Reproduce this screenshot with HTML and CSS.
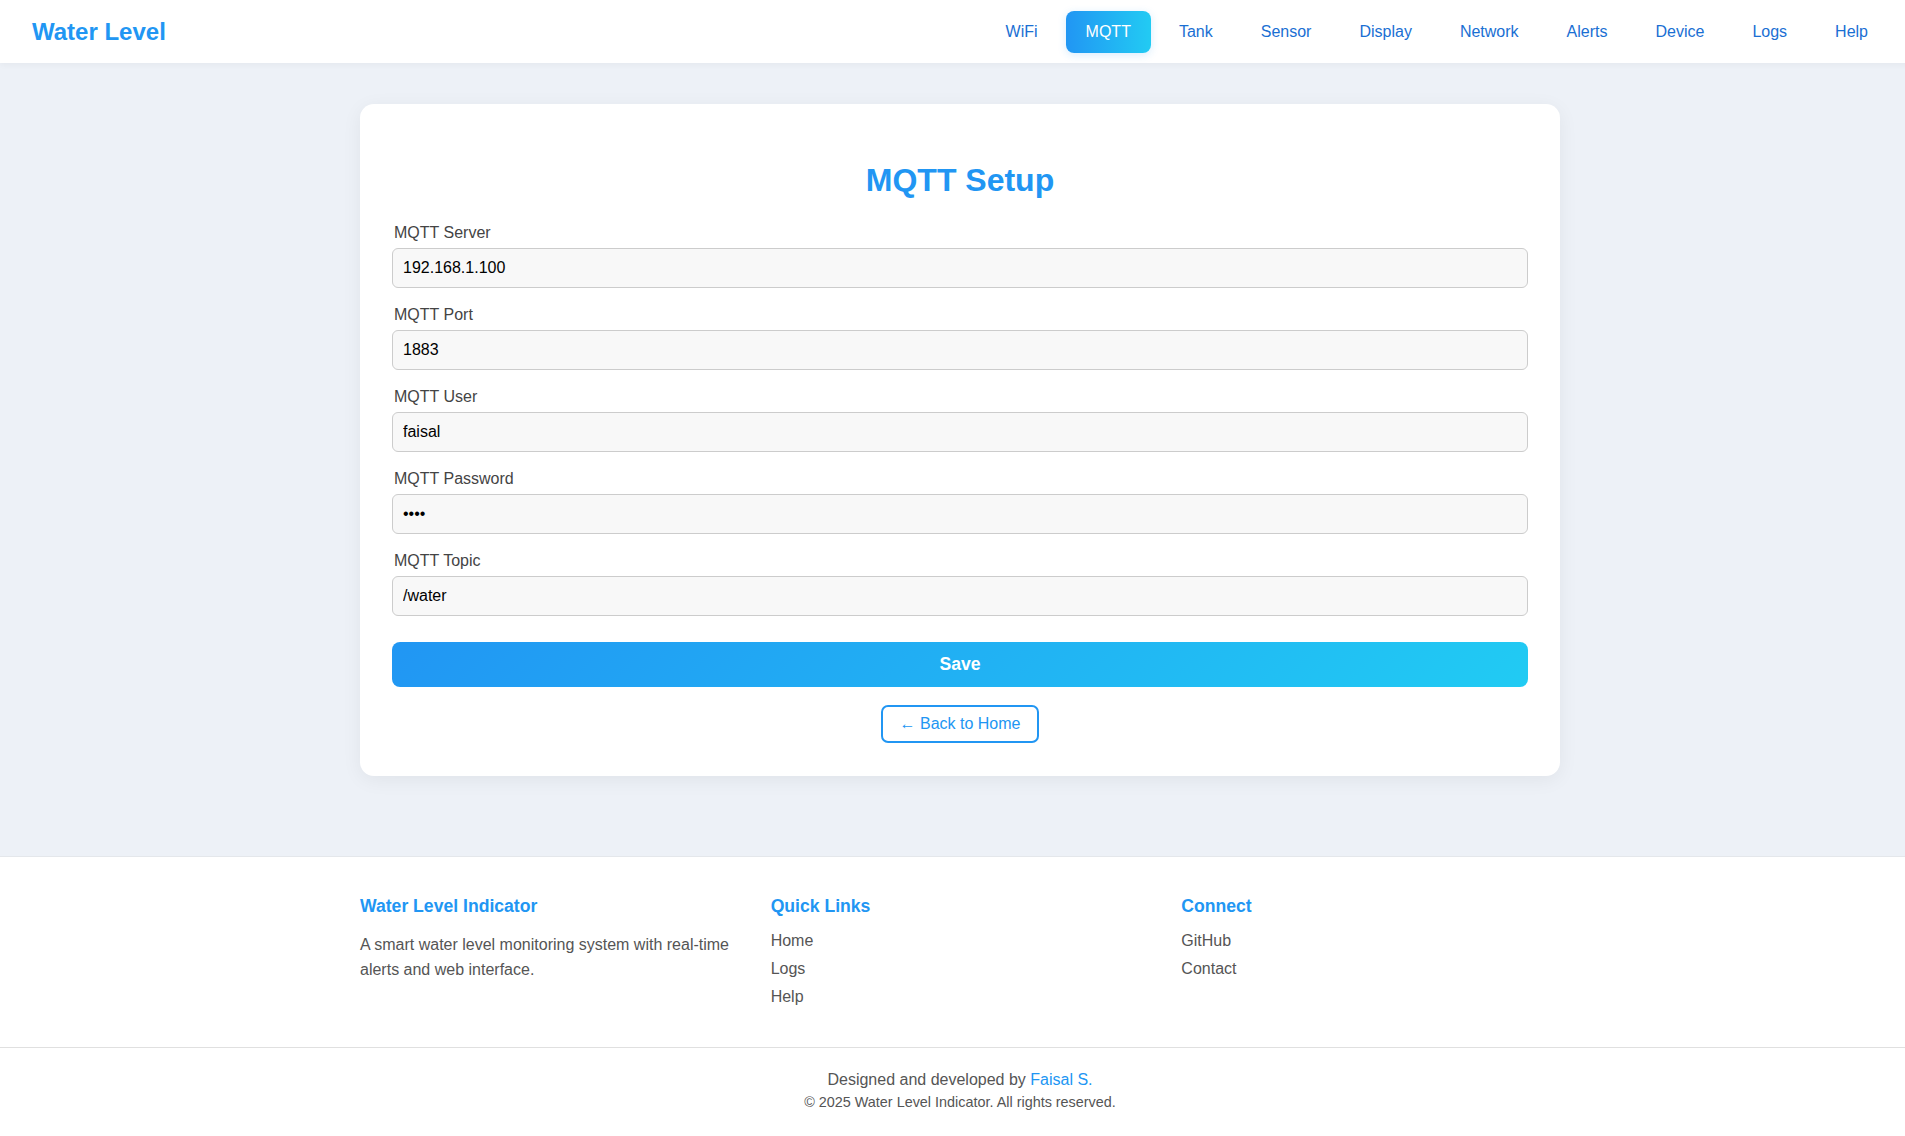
FILE: index.html
```html
<!DOCTYPE html>
<html lang="en">
<head>
<meta charset="utf-8">
<title>MQTT Setup - Water Level</title>
<link rel="stylesheet" href="styles.css">
</head>
<body>
<div class="page">
  <header class="topbar">
    <div class="logo">Water Level</div>
    <nav class="nav">
      <a href="#" class="nav-link">WiFi</a>
      <a href="#" class="nav-link active">MQTT</a>
      <a href="#" class="nav-link">Tank</a>
      <a href="#" class="nav-link">Sensor</a>
      <a href="#" class="nav-link">Display</a>
      <a href="#" class="nav-link">Network</a>
      <a href="#" class="nav-link">Alerts</a>
      <a href="#" class="nav-link">Device</a>
      <a href="#" class="nav-link">Logs</a>
      <a href="#" class="nav-link">Help</a>
    </nav>
  </header>

  <main class="main">
    <section class="card">
      <h2 class="card-title">MQTT Setup</h2>
      <form class="form">
        <div class="field">
          <label class="field-label">MQTT Server</label>
          <input class="field-input" type="text" value="192.168.1.100">
        </div>
        <div class="field">
          <label class="field-label">MQTT Port</label>
          <input class="field-input" type="text" value="1883">
        </div>
        <div class="field">
          <label class="field-label">MQTT User</label>
          <input class="field-input" type="text" value="faisal">
        </div>
        <div class="field">
          <label class="field-label">MQTT Password</label>
          <input class="field-input" type="password" value="1234">
        </div>
        <div class="field">
          <label class="field-label">MQTT Topic</label>
          <input class="field-input" type="text" value="/water">
        </div>
        <button type="button" class="save-btn">Save</button>
      </form>
      <div class="back-row">
        <a href="#" class="back-btn">← Back to Home</a>
      </div>
    </section>
  </main>

  <footer class="footer">
    <div class="footer-top">
      <div class="footer-col">
        <h3 class="footer-heading">Water Level Indicator</h3>
        <p class="footer-text">A smart water level monitoring system with real-time alerts and web interface.</p>
      </div>
      <div class="footer-col">
        <h3 class="footer-heading">Quick Links</h3>
        <ul class="footer-list">
          <li><a href="#" class="footer-link">Home</a></li>
          <li><a href="#" class="footer-link">Logs</a></li>
          <li><a href="#" class="footer-link">Help</a></li>
        </ul>
      </div>
      <div class="footer-col">
        <h3 class="footer-heading">Connect</h3>
        <ul class="footer-list">
          <li><a href="#" class="footer-link">GitHub</a></li>
          <li><a href="#" class="footer-link">Contact</a></li>
        </ul>
      </div>
    </div>
    <div class="footer-bottom">
      <div class="credit">Designed and developed by <a href="#" class="credit-link">Faisal S.</a></div>
      <div class="copyright">© 2025 Water Level Indicator. All rights reserved.</div>
    </div>
  </footer>
</div>
</body>
</html>
```
FILE: styles.css
```css
html {
  overflow-x: hidden;
}

body {
  margin: 0;
  font-family: "Liberation Sans", Arial, sans-serif;
  line-height: 1.6;
  color: #333;
  background: #edf1f7;
}

.page {
  width: 1920px;
}

a {
  text-decoration: none;
}

/* Header */
.topbar {
  height: 63px;
  box-sizing: border-box;
  padding: 0 32px;
  display: flex;
  align-items: center;
  justify-content: space-between;
  background: #fff;
  box-shadow: 0 2px 6px rgba(0, 0, 0, 0.04);
  position: relative;
  z-index: 1;
}

.logo {
  font-size: 24px;
  font-weight: bold;
  color: #2196f3;
  line-height: 1.15;
}

.nav {
  display: flex;
  gap: 8px;
}

.nav-link {
  display: block;
  padding: 11px 20px;
  font-size: 16px;
  line-height: 20px;
  color: #1a6fd3;
  border-radius: 8px;
}

.nav-link.active {
  color: #fff;
  background: linear-gradient(90deg, #2196f3, #22cbf3);
  box-shadow: 0 2px 8px rgba(33, 150, 243, 0.18);
}

/* Main */
.main {
  padding: 41px 0 80px;
}

.card {
  width: 1200px;
  box-sizing: border-box;
  margin: 0 auto;
  padding: 32px;
  background: #fff;
  border-radius: 14px;
  box-shadow: 0 4px 20px rgba(0, 0, 0, 0.06);
}

.card-title {
  margin: 26px 0 20px;
  text-align: center;
  font-size: 32px;
  line-height: 37px;
  color: #2196f3;
}

.field {
  margin-bottom: 13.4px;
}

.field-label {
  display: block;
  padding: 1px 0 0 2px;
  margin-bottom: 2px;
  font-size: 16px;
  color: #444;
}

.field-input {
  display: block;
  width: 100%;
  box-sizing: border-box;
  height: 40px;
  padding: 0 10px;
  font-family: "Liberation Sans", Arial, sans-serif;
  font-size: 16px;
  color: #000;
  background: #f8f8f8;
  border: 1px solid #cccccc;
  border-radius: 6px;
}

.save-btn {
  display: block;
  width: 100%;
  height: 45px;
  margin-top: 26px;
  border: none;
  border-radius: 8px;
  font-family: "Liberation Sans", Arial, sans-serif;
  font-size: 17.6px;
  font-weight: bold;
  color: #fff;
  background: linear-gradient(135deg, #2196f3, #21cbf3);
}

.back-row {
  margin-top: 18px;
  text-align: center;
  line-height: 1;
}

.back-btn {
  display: inline-block;
  padding: 8px 17px;
  font-size: 16px;
  line-height: 18px;
  color: #2196f3;
  border: 2px solid #2196f3;
  border-radius: 7px;
  margin-bottom: 1px;
}

/* Footer */
.footer {
  background: #fff;
  border-top: 1px solid #e4e7eb;
}

.footer-top {
  width: 1200px;
  margin: 0 auto;
  padding: 39px 0 31px;
  display: grid;
  grid-template-columns: repeat(3, 1fr);
  gap: 32px;
}

.footer-heading {
  margin: 0 0 16px;
  font-size: 17.6px;
  line-height: 20px;
  color: #2196f3;
}

.footer-text {
  margin: 0;
  font-size: 16px;
  line-height: 25.6px;
  color: #555;
}

.footer-list {
  list-style: none;
  margin: 0;
  padding: 0;
}

.footer-list li {
  margin-bottom: 9.6px;
  line-height: 18.4px;
}

.footer-link {
  font-size: 16px;
  color: #555;
}

.footer-bottom {
  border-top: 1px solid #e0e0e0;
  padding: 19px 0 28px;
  text-align: center;
  color: #555;
}

.credit {
  font-size: 16px;
  line-height: 25.6px;
}

.credit-link {
  color: #2196f3;
}

.copyright {
  font-size: 14.4px;
  line-height: 21px;
  color: #555;
}
```
